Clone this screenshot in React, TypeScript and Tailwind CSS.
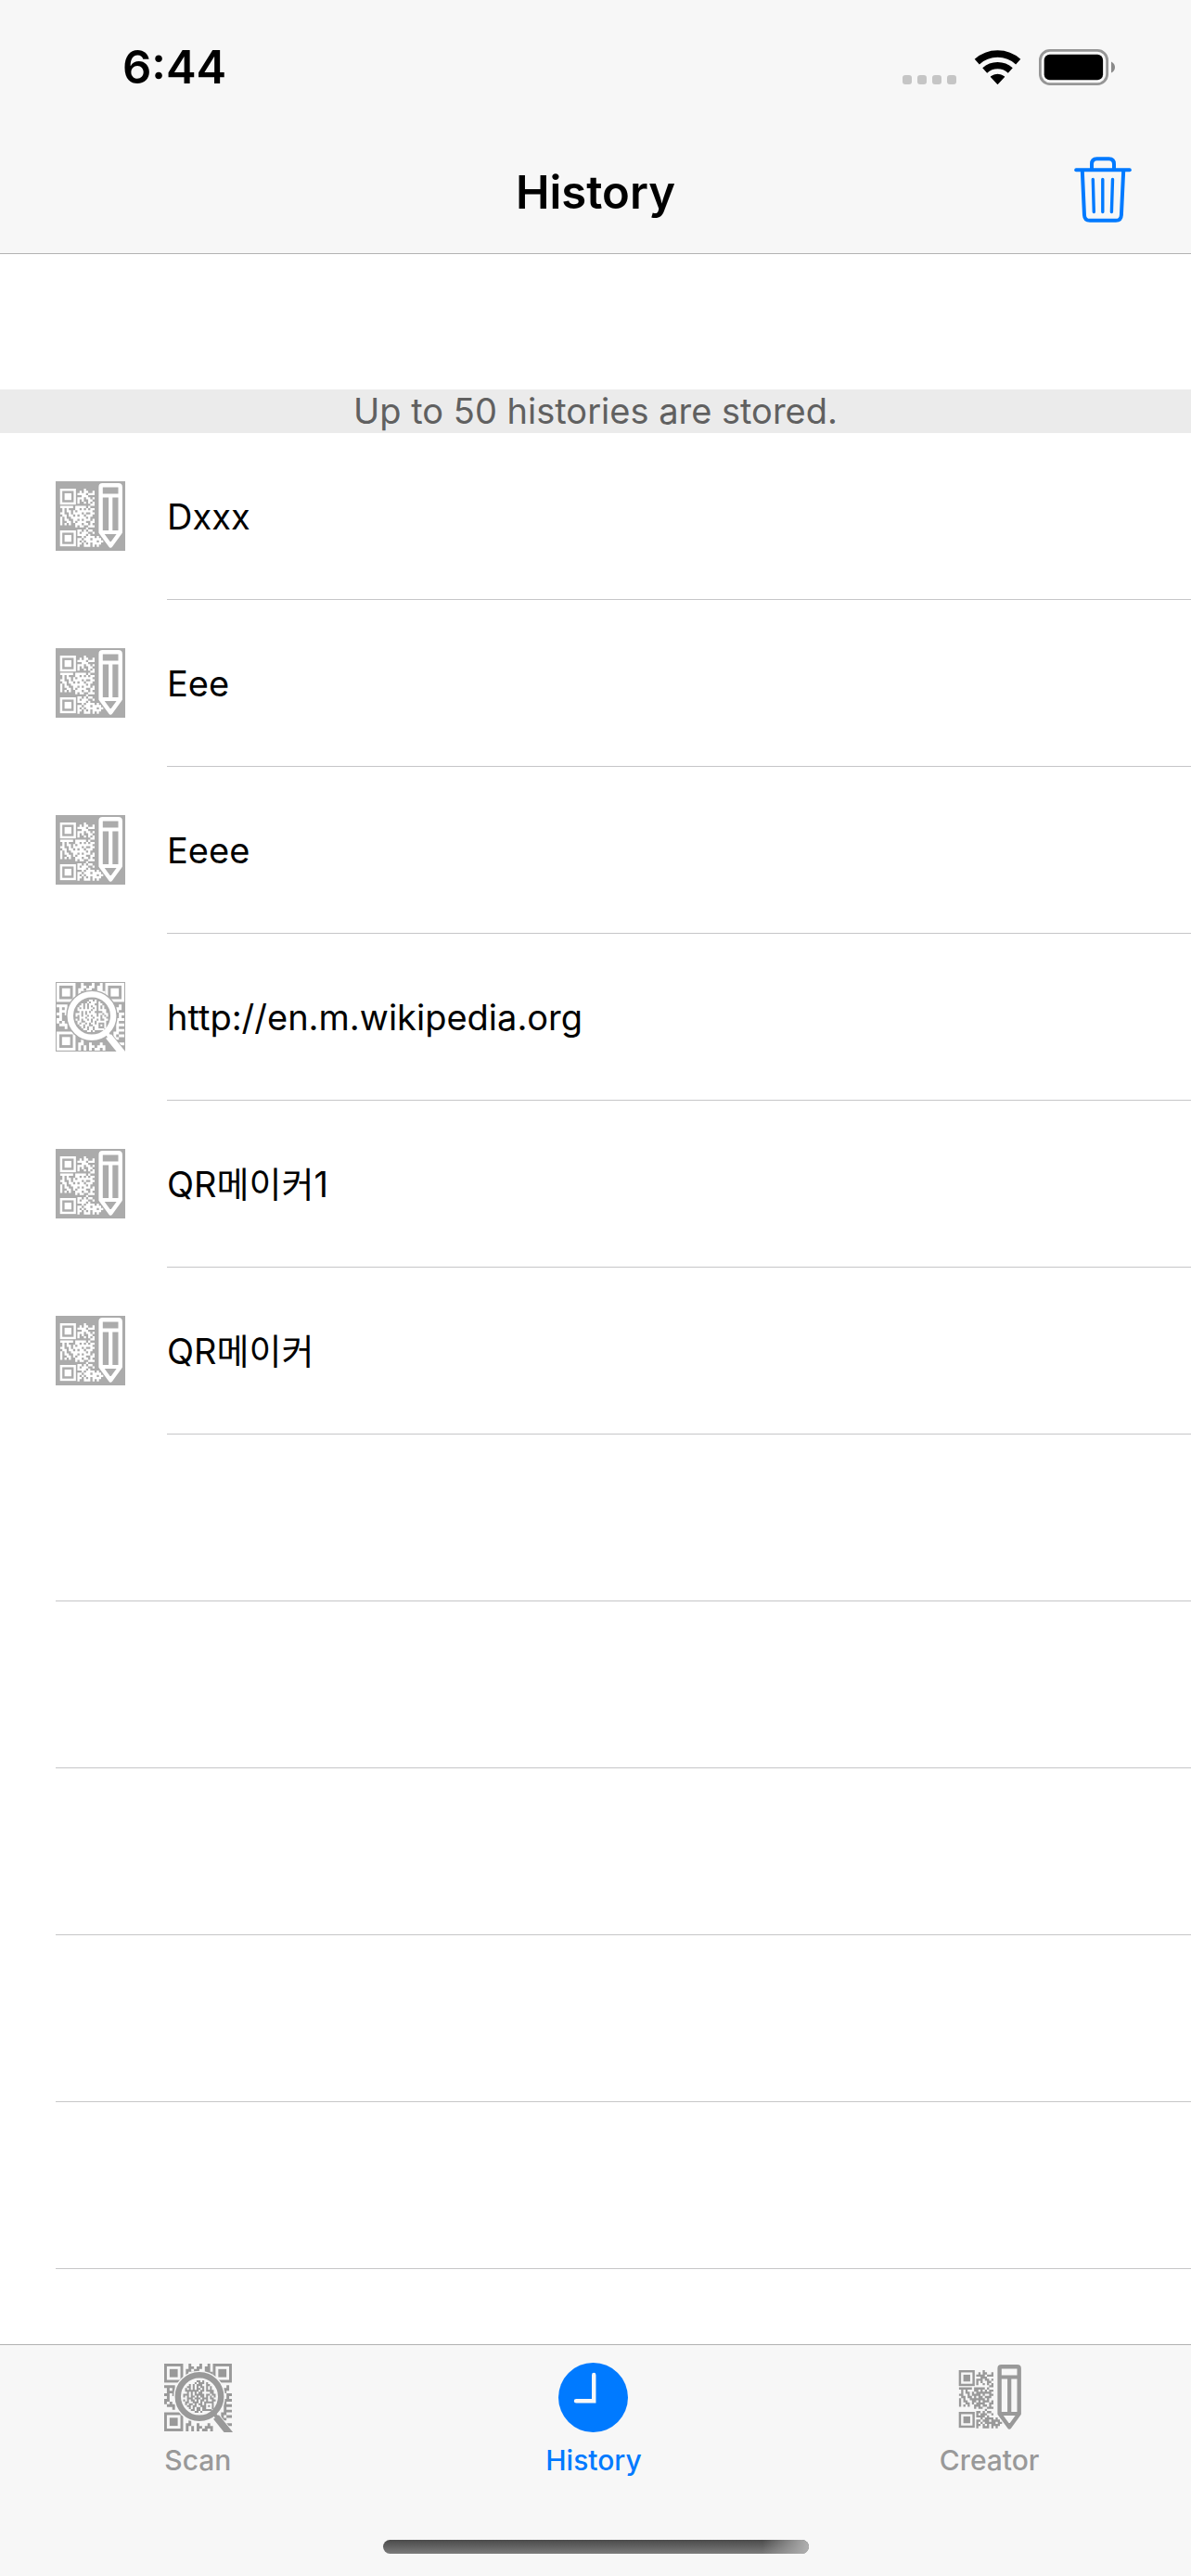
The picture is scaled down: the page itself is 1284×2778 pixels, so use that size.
import React from 'react';

type IconProps = { color: string; background: string };

// QR modules beside the pencil, finder squares are drawn separately
const creatorModules = [
  '...........#....',
  '.........#.##..#',
  '........####.###',
  '..........###...',
  '........###.##.#',
  '........#.#..##.',
  '........#..#.#.#',
  '..............##',
  '######.#####.#..',
  '.#.#...##.#.#.##',
  '.#.##.#.#######.',
  '##..#.####.#..##',
  '.##.##.#.##.###.',
  '#.#..#######.#..',
  '#.##..##.#.###.#',
  '#..##.#.####..##',
  '#.#.#..###.##.#.',
  '.......#.##..###',
  '............#...',
  '........##.#.##.',
  '........#.###..#',
  '........####.#..',
  '..........#.####.#',
  '........##.###.####',
  '........#.#.#####.##',
  '........##.#.#.####.',
  '........#..###.#.#..',
];

// outer QR code behind the magnifier
const scanModules = [
  '.........#...#..#........',
  '.........##.##.##........',
  '........##.##..##........',
  '........#.########.......',
  '........###...#.##.......',
  '........##.......#.......',
  '........#................',
  '.........................',
  '####...................#.',
  '.#.#..................##.',
  '.###..................#..',
  '##.#...................##',
  '.#.....................#.',
  '##....................###',
  '#.#...................#..',
  '.###..................###',
  '...#..................#..',
  '......................###',
  '.....................##..',
  '.....................#.##',
  '....................###..',
  '.........#...........#...',
  '........##..#...#....#.##',
  '........#.#.##.###.......',
  '........#.#.#.##.#.......',
];

// smaller code seen through the lens
const lensModules = [
  '.......##.#......',
  '......#.###.#....',
  '...#.#.###..##...',
  '..##.#.#.##.#.#..',
  '.#.#.#.##.#.#.#..',
  '.#######.##.####.',
  '..#.#.#.##....##.',
  '###.#.#####.##.##',
  '#.#.##.#.##.#.#.#',
  '..###.###.###.##.',
  '#.#.##.#.##.#..##',
  '.##..###.#.#####.',
  '.#.##.#.##.#...#.',
  '..##.##..###.#.#.',
  '...#.#.##.##...#.',
  '....##.##.#####..',
  '......##.#.......',
];

const modulePath = (rows: string[], size: number, x: number, y: number) =>
  rows
    .flatMap((row, r) =>
      [...row].map((cell, c) =>
        cell === '#' ? `M${x + c * size} ${y + r * size}h${size}v${size}h${-size}z` : ''
      )
    )
    .join('');

const Finder: React.FC<{ x: number; y: number; size: number; color: string }> = ({ x, y, size, color }) => (
  <g>
    <rect
      x={x + size / 2}
      y={y + size / 2}
      width={size * 6}
      height={size * 6}
      fill="none"
      stroke={color}
      strokeWidth={size}
    />
    <rect x={x + size * 2} y={y + size * 2} width={size * 3} height={size * 3} fill={color} />
  </g>
);

const CreatorIcon: React.FC<IconProps> = ({ color, background }) => (
  <svg viewBox="0 0 75 75" className="size-[75px]" aria-hidden="true">
    <rect width="75" height="75" fill={background} />
    <Finder x={4.7} y={8} size={2.45} color={color} />
    <Finder x={4.7} y={53} size={2.45} color={color} />
    <path d={modulePath(creatorModules, 2.32, 4.9, 8)} fill={color} />
    {/* Pencil */}
    <path
      d="M50.500 4.300H67.700Q69.700 4.300 69.700 6.300V55L59.200 69.500L48.600 55V6.300Q48.600 4.300 50.500 4.300Z"
      fill={background}
      stroke={color}
      strokeWidth="4.400"
      strokeLinejoin="round"
    />
    <path d="M48.600 15.500H69.700M59.200 15.500V55M48.600 55H69.700" fill="none" stroke={color} strokeWidth="4.200" />
    <path d="M56 65.500L59.200 71L62.400 65.500Z" fill={color} stroke={color} strokeWidth="1" />
  </svg>
);

const ScanIcon: React.FC<IconProps> = ({ color, background }) => (
  <svg viewBox="0 0 75 75" className="size-[75px]" aria-hidden="true">
    <rect width="75" height="75" fill={background} />
    <Finder x={1} y={1} size={2.92} color={color} />
    <Finder x={53.500} y={1} size={2.92} color={color} />
    <Finder x={1} y={53.500} size={2.92} color={color} />
    <path d={modulePath(scanModules, 2.92, 1, 1)} fill={color} />
    {/* Magnifier */}
    <path d="M54 57L72 79" stroke={background} strokeWidth="11.500" />
    <circle cx="39" cy="36.500" r="27.800" fill={background} />
    <circle cx="39" cy="36.500" r="23.200" fill="none" stroke={color} strokeWidth="6.400" />
    <path d="M53 53L59 60" stroke={color} strokeWidth="4" />
    <path d="M57 58.500L72 77" stroke={color} strokeWidth="7.500" />
    <path d={modulePath(lensModules, 2.06, 21.500, 19)} fill={color} />
  </svg>
);

const ClockIcon: React.FC = () => (
  <svg viewBox="0 0 76 76" className="size-[75px]" aria-hidden="true">
    <circle cx="38" cy="38" r="38" fill="#007aff" />
    <path d="M36.500 13.500Q36.500 11 38.700 11Q41 11 41 13.500V44H19.500Q17 44 17 41.700Q17 39.400 19.500 39.400H36.500Z" fill="#f7f7f7" />
  </svg>
);

const TrashIcon: React.FC = () => (
  <svg viewBox="0 0 62 72" className="h-[72px] w-[62px]" fill="none" stroke="#007aff" strokeLinecap="round" aria-hidden="true">
    <path d="M2.200 14.200H59.800" strokeWidth="4" />
    <path d="M19 14V8Q19 2.200 24.500 2.200H37.500Q43 2.200 43 8V14" strokeWidth="4" />
    <path d="M8.800 15L11 63Q11.300 68.800 17 68.800H45Q50.600 68.800 50.900 63L53.200 15" strokeWidth="4" />
    <path d="M20.300 24.500L21.300 59.500M30.800 24.500V59.500M41.500 24.500L40.400 59.500" strokeWidth="3.400" />
  </svg>
);

const WifiIcon: React.FC = () => (
  <svg viewBox="0 0 51 38" className="h-[38px] w-[51px]" fill="none" stroke="black" aria-hidden="true">
    <path d="M3.300 12.600A33 33 0 0 1 47.700 12.600" strokeWidth="7.600" />
    <path d="M11.700 21.900A20.600 20.600 0 0 1 39.300 21.900" strokeWidth="7.400" />
    <path d="M18.500 28.800A11 11 0 0 1 32.500 28.800L25.500 36.300Z" fill="black" strokeWidth="1.200" strokeLinejoin="round" />
  </svg>
);

const BatteryIcon: React.FC = () => (
  <svg viewBox="0 0 82 39" className="h-[39px] w-[82px]" aria-hidden="true">
    <rect x="1.400" y="1.400" width="72.200" height="36.200" rx="10.500" fill="none" stroke="#969696" strokeWidth="2.800" />
    <rect x="5.700" y="5.700" width="63.400" height="27.600" rx="6" fill="black" />
    <path d="M78 13.500Q82 15.500 82 19.500T78 25.500Z" fill="#8a8a8a" />
  </svg>
);

const histories = [
  { id: 1, title: 'Dxxx', kind: 'creator' },
  { id: 2, title: 'Eee', kind: 'creator' },
  { id: 3, title: 'Eeee', kind: 'creator' },
  { id: 4, title: 'http://en.m.wikipedia.org', kind: 'scan' },
  { id: 5, title: 'QR메이커1', kind: 'creator' },
  { id: 6, title: 'QR메이커', kind: 'creator' },
];

const emptyRows = [1, 2, 3, 4, 5];

const tabs = [
  { label: 'Scan', active: false, icon: <ScanIcon color="#999999" background="#f7f7f7" /> },
  { label: 'History', active: true, icon: <ClockIcon /> },
  { label: 'Creator', active: false, icon: <CreatorIcon color="#999999" background="#f7f7f7" /> },
];

const StatusBar: React.FC = () => (
  <div className="flex h-[141px] items-center justify-between pt-1 pr-[82px] pl-[132px]">
    <span className="text-[49px] leading-none font-semibold">6:44</span>
    <div className="flex items-center">
      <div className="mt-[26px] mr-[19px] flex gap-[6px]">
        {[0, 1, 2, 3].map((dot) => (
          <span key={dot} className="size-[10px] rounded-[3px] bg-[#c5c5c5]" />
        ))}
      </div>
      <WifiIcon />
      <div className="ml-[19px]">
        <BatteryIcon />
      </div>
    </div>
  </div>
);

const App: React.FC = () => {
  return (
    <div className="flex min-h-screen flex-col bg-white font-['Inter','Noto_Sans_CJK_KR',sans-serif] text-black">
      <header className="border-b border-[#b2b2b2] bg-[#f7f7f7]">
        <StatusBar />
        <div className="grid h-[132px] grid-cols-[1fr_auto_1fr] items-center">
          <h1 className="col-start-2 text-[49px] leading-none font-semibold">History</h1>
          <button type="button" aria-label="Delete all" className="mr-16 mb-1 justify-self-end">
            <TrashIcon />
          </button>
        </div>
      </header>

      <main className="flex-1 pt-[146px]">
        <p className="bg-[#ebebeb] text-center text-[38px] leading-[47px] text-[#606060]">
          Up to 50 histories are stored.
        </p>
        <ul>
          {histories.map((item) => (
            <li key={item.id}>
              <button type="button" className="flex h-[180px] w-full gap-[45px] pl-[60px] text-left">
                <span className="pt-[52px]">
                  {item.kind === 'scan' ? (
                    <ScanIcon color="#ffffff" background="#ababab" />
                  ) : (
                    <CreatorIcon color="#ffffff" background="#ababab" />
                  )}
                </span>
                <span className="flex h-full flex-1 items-center border-b border-[#c6c6c8] pt-0.5 text-[38px]">
                  {item.title}
                </span>
              </button>
            </li>
          ))}
        </ul>
        {emptyRows.map((row) => (
          <div key={row} className="ml-[60px] h-[180px] border-b border-[#c6c6c8]" />
        ))}
      </main>

      <footer className="flex h-[250px] flex-col justify-between border-t border-[#b2b2b2] bg-[#f7f7f7] pt-[19px] pb-6">
        <nav className="grid grid-cols-3 pr-1">
          {tabs.map((tab) => (
            <a
              key={tab.label}
              href={`#${tab.label.toLowerCase()}`}
              className={`flex flex-col items-center gap-3 text-[30px] leading-9 font-medium ${
                tab.active ? 'text-[#007aff]' : 'text-[#999999]'
              }`}
            >
              {tab.icon}
              {tab.label}
            </a>
          ))}
        </nav>
        {/* Home indicator */}
        <div className="mx-auto h-[15px] w-[459px] overflow-hidden rounded-full bg-linear-to-b from-[#4a4a4a] to-[#7c7c7c]">
          <div className="ml-auto h-full w-[50px] bg-linear-to-r from-transparent to-[#b0b0b0]" />
        </div>
      </footer>
    </div>
  );
};

export default App;
